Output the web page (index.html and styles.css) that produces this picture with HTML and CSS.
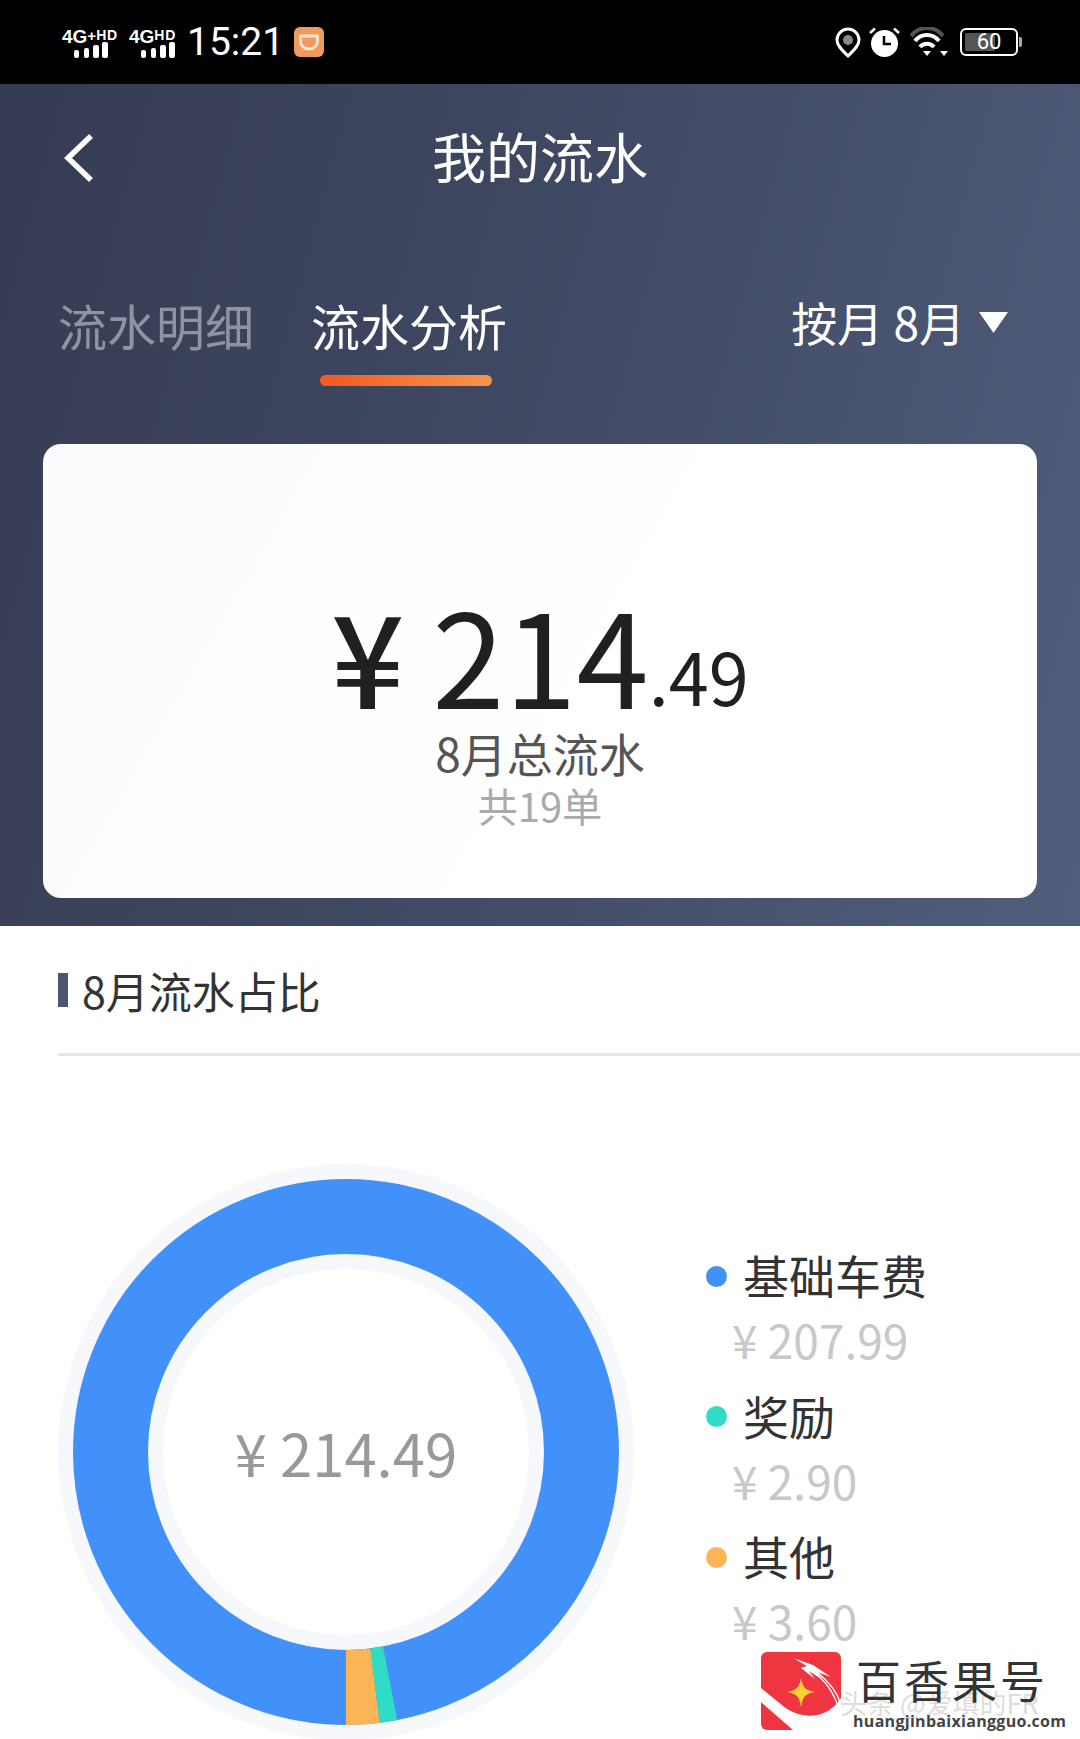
FILE: index.html
```html
<!DOCTYPE html>
<html lang="zh-CN">
<head>
<meta charset="utf-8">
<title>我的流水</title>
<link rel="stylesheet" href="styles.css">
</head>
<body>
<div class="page">
  <div class="status">
    <div class="net">
      <div class="net-item"><span class="net-label">4G<i>+</i><b>HD</b></span><svg class="bars" width="34" height="16" viewBox="0 0 34 16"><rect x="0" y="8" width="5" height="8" rx="2"/><rect x="10" y="6" width="5" height="10" rx="2"/><rect x="19" y="3" width="6" height="13" rx="2"/><rect x="28" y="0" width="6" height="16" rx="2"/></svg></div>
      <div class="net-item"><span class="net-label">4G<b>HD</b></span><svg class="bars" width="34" height="16" viewBox="0 0 34 16"><rect x="0" y="8" width="5" height="8" rx="2"/><rect x="10" y="6" width="5" height="10" rx="2"/><rect x="19" y="3" width="6" height="13" rx="2"/><rect x="28" y="0" width="6" height="16" rx="2"/></svg></div>
    </div>
    <span class="time">15:21</span>
    <svg class="didi" width="30" height="30" viewBox="0 0 30 30"><rect width="30" height="30" rx="6" fill="#ef9a5e"/><path d="M6.500 9H23.500V14A8.500 8 0 0 1 6.500 14Z" fill="none" stroke="#fde6cf" stroke-width="2.800" stroke-linejoin="round"/></svg>
    <div class="status-right">
      <svg width="26" height="31" viewBox="0 0 26 31"><path d="M13 2A11 11 0 0 1 24 13C24 19 18 24 13 29C8 24 2 19 2 13A11 11 0 0 1 13 2Z" fill="none" stroke="#fff" stroke-width="3"/><circle cx="13" cy="13" r="5" fill="#8a8a8a"/></svg>
      <svg width="31" height="30" viewBox="0 0 31 30"><circle cx="15.500" cy="16.500" r="13.500" fill="#fff"/><path d="M15 9V17H22" fill="none" stroke="#000" stroke-width="2.500"/><path d="M1 6L6 1.500M30 6L25 1.500" stroke="#fff" stroke-width="2.500"/></svg>
      <svg class="wifi" width="38" height="30" viewBox="0 0 38 30"><path d="M1 9A20 20 0 0 1 33 9" fill="none" stroke="#555" stroke-width="4"/><path d="M5 14A15 15 0 0 1 29 14" fill="none" stroke="#fff" stroke-width="4"/><path d="M10 20A9 9 0 0 1 24 20" fill="none" stroke="#fff" stroke-width="4"/><path d="M13 24H21L17 29Z" fill="#fff"/><path d="M30 24H38L34 29Z" fill="#fff"/></svg>
      <div class="battery"><span class="battery-fill"></span><span class="battery-num">60</span><span class="battery-cap"></span></div>
    </div>
  </div>

  <header class="hero">
    <div class="nav">
      <svg class="back" width="31" height="50" viewBox="0 0 31 50"><path d="M28 3L5 25L28 47" fill="none" stroke="#fff" stroke-width="5.500"/></svg>
      <h1 class="title">我的流水</h1>
    </div>
    <div class="tabs">
      <span class="tab">流水明细</span>
      <span class="tab tab-active">流水分析</span>
      <div class="month">按月 8月<svg width="29" height="21" viewBox="0 0 29 21"><path d="M0 0H29L14.500 21Z" fill="#fff"/></svg></div>
    </div>
    <div class="card">
      <div class="amount"><span class="yen">¥</span><span class="int">214</span><span class="dec">.49</span></div>
      <div class="card-label">8月总流水</div>
      <div class="card-sub">共19单</div>
    </div>
  </header>

  <section class="share">
    <div class="share-head"><span class="mark"></span><h2>8月流水占比</h2></div>
    <div class="chart-row">
      <div class="donut">
        <svg width="576" height="576" viewBox="-288 -288 576 576">
          <circle r="280.500" fill="none" stroke="#f6f8fb" stroke-width="15"/>
          <circle r="190.500" fill="none" stroke="#f6f8fb" stroke-width="15"/>
          <circle r="235.500" fill="none" stroke="#4290fa" stroke-width="75"/>
          <path d="M0 235.500A235.500 235.500 0 0 0 29.100 233.700" fill="none" stroke="#fcb556" stroke-width="75"/>
          <path d="M29.100 233.700A235.500 235.500 0 0 0 44.100 231.300" fill="none" stroke="#2fdcc6" stroke-width="75"/>
        </svg>
        <span class="donut-total">¥ 214.49</span>
      </div>
      <ul class="legend">
        <li><div class="legend-name"><i class="dot dot-blue"></i>基础车费</div><div class="legend-val">¥ 207.99</div></li>
        <li><div class="legend-name"><i class="dot dot-teal"></i>奖励</div><div class="legend-val">¥ 2.90</div></li>
        <li><div class="legend-name"><i class="dot dot-orange"></i>其他</div><div class="legend-val">¥ 3.60</div></li>
      </ul>
    </div>
  </section>

  <div class="stamp">
    <span class="stamp-mark">头条 @爱填的FR</span>
    <svg class="stamp-logo" width="80" height="78" viewBox="0 0 80 78"><path d="M6 0H74A6 6 0 0 1 80 6V46C66 68 40 68 22 54L0 36V6A6 6 0 0 1 6 0Z" fill="#ee3540"/><path d="M0 50L32 78H6A6 6 0 0 1 0 72Z" fill="#ee3540"/><path d="M40 26C42 36 44 38 54 40C44 42 42 44 40 55C38 44 36 42 26 40C36 38 38 36 40 26Z" fill="#fdd22e"/><path d="M32 6L52 13L70 25L56 20L62 28L48 19L54 27L40 16L46 14Z" fill="#fff"/><path d="M50 18C64 28 74 42 78 58M56 20C68 30 76 40 79 50" fill="none" stroke="#fff" stroke-width="1.500"/></svg>
    <div class="stamp-text"><span class="stamp-name">百香果号</span><span class="stamp-url">huangjinbaixiangguo.com</span></div>
  </div>
</div>
</body>
</html>
```
FILE: styles.css
```css
* { box-sizing: border-box; }
html, body { margin: 0; padding: 0; background: #fff; }
body { font-family: "Noto Sans CJK SC", "Noto Sans", sans-serif; }
.page { position: relative; width: 1080px; height: 1739px; overflow: hidden; }
h1, h2, ul { margin: 0; padding: 0; font-weight: 400; }
ul { list-style: none; }

.status { height: 84px; background: #000; color: #fff; display: flex; align-items: center; padding: 0 62px 0 62px; }
.net { display: flex; gap: 9px; }
.net-item { width: 58px; display: flex; flex-direction: column; align-items: flex-start; }
.net-label { font: 700 19px/17px "Liberation Sans", sans-serif; white-space: nowrap; height: 15px; }
.net-label i { font-style: normal; font-size: 15px; vertical-align: 2px; }
.net-label b { font-size: 14px; vertical-align: 3px; letter-spacing: .8px; }
.bars { fill: #fff; margin: 0 0 0 12px; }
.time { font: 400 39px/1 Roboto, sans-serif; margin-left: 0; width: 107px; color: #fff; }
.didi { flex: none; }
.status-right { margin-left: auto; display: flex; align-items: center; gap: 8px; }
.wifi { margin-left: 2px; }
.battery { position: relative; width: 58px; height: 28px; border: 2px solid #fff; border-radius: 6px; margin-left: 4px; overflow: visible; }
.battery-fill { position: absolute; left: 3px; top: 3px; bottom: 3px; width: 30px; background: #555; border-radius: 2px; }
.battery-num { position: relative; display: block; text-align: center; font: 400 22px/24px Roboto, sans-serif; }
.battery-cap { position: absolute; right: -6px; top: 7px; width: 3px; height: 10px; background: #aaa; border-radius: 0 2px 2px 0; }

.hero { height: 842px; background: linear-gradient(105deg, #353b52 0%, #414a64 50%, #505e7c 100%); padding: 0 43px; }
.nav { position: relative; height: 148px; display: flex; align-items: center; justify-content: center; }
.back { position: absolute; left: 20px; top: 49px; }
.title { color: #fff; font-size: 54px; line-height: 1; margin-top: -4px; }
.tabs { display: flex; align-items: flex-start; height: 212px; padding: 63px 29px 0 15px; }
.tab { position: relative; font-size: 49px; line-height: 60px; color: #8f94a3; margin-right: 57px; }
.tab-active { color: #fff; }
.tab-active::after { content: ""; position: absolute; left: 9px; top: 80px; width: 172px; height: 11px; border-radius: 6px; background: linear-gradient(90deg, #f05a22, #f8944e); }
.month { margin-left: auto; display: flex; align-items: center; gap: 14px; color: #fff; font-size: 46px; line-height: 56px; margin-top: -2px; }
.month svg { margin-top: 2px; }
.card { height: 454px; border-radius: 18px; background: linear-gradient(120deg, #fafbfd, #fff 60%); display: flex; flex-direction: column; align-items: center; padding-top: 156px; }
.amount { display: flex; align-items: baseline; color: #1f2022; height: 104px; line-height: 104px; }
.yen { font-size: 128px; font-weight: 500; margin-right: 28px; }
.int { font-size: 130px; }
.dec { font-size: 72px; transform: translateY(-3px); }
.card-label { font-size: 46px; line-height: 56px; color: #555; margin-top: 20px; }
.card-sub { font-size: 40px; line-height: 50px; color: #aaa; }

.share { padding-left: 58px; }
.share-head { height: 130px; border-bottom: 3px solid #e6e6e6; display: flex; align-items: center; }
.mark { width: 10px; height: 34px; background: #4a5674; margin-right: 14px; }
.share-head h2 { font-size: 43px; line-height: 56px; color: #333; }
.chart-row { display: flex; margin-top: 108px; }
.donut { position: relative; width: 576px; height: 576px; flex: none; }
.donut svg { display: block; }
.donut-total { position: absolute; inset: 0; display: flex; align-items: center; justify-content: center; font-size: 58px; line-height: 1; color: #999; }
.legend { margin: 80px 0 0 72px; }
.legend li { height: 140.500px; }
.legend-name { display: flex; align-items: center; font-size: 46px; line-height: 60px; color: #333; }
.dot { width: 21px; height: 21px; border-radius: 50%; margin: 4px 16px 0 0; }
.dot-blue { background: #4290fa; }
.dot-teal { background: #2fdcc6; }
.dot-orange { background: #fcb556; }
.legend-val { font-size: 46px; line-height: 60px; color: #c8c8c8; margin: 5px 0 0 26px; }

.stamp { position: absolute; left: 761px; top: 1652px; width: 319px; height: 87px; display: flex; align-items: flex-start; }
.stamp-logo { position: relative; flex: none; }
.stamp-text { position: relative; display: flex; flex-direction: column; margin-left: 12px; color: #333; }
.stamp-name { font-size: 45px; line-height: 56px; letter-spacing: 3px; margin-left: 3px; }
.stamp-url { font: 700 16px/20px "Open Sans", sans-serif; letter-spacing: .3px; color: #444; margin-top: 3px; margin-left: 0; }
.stamp-mark { position: absolute; left: 79px; top: 36px; font-size: 27px; line-height: 30px; color: rgba(190,190,190,.55); white-space: nowrap; }
```
